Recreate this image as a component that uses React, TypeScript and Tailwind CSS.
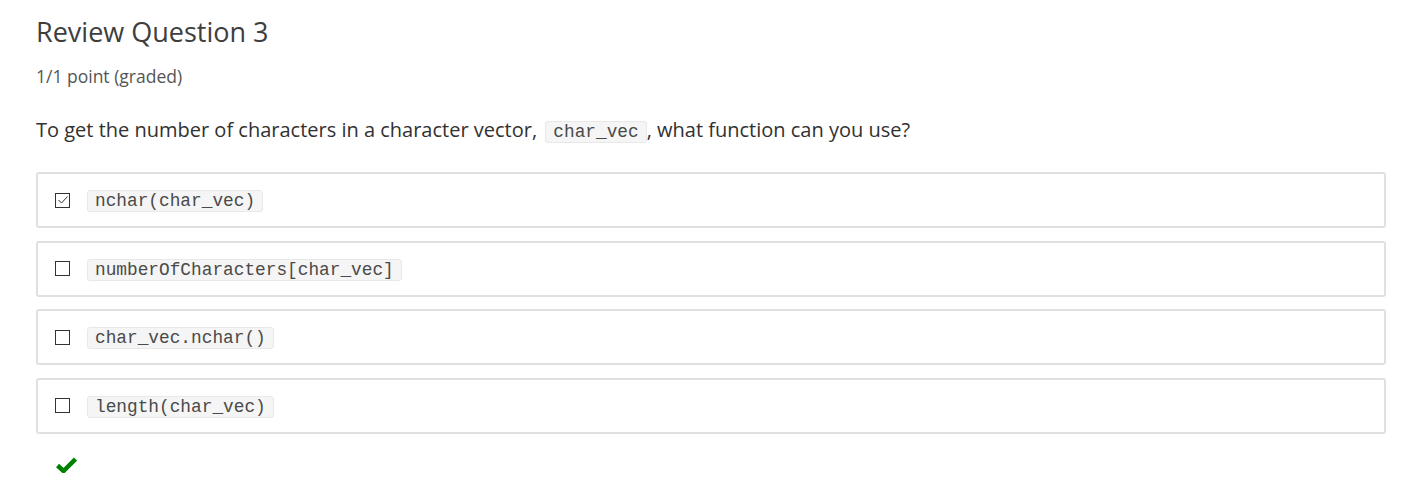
const options = [
  { code: 'nchar(char_vec)', checked: true },
  { code: 'numberOfCharacters[char_vec]', checked: false },
  { code: 'char_vec.nchar()', checked: false },
  { code: 'length(char_vec)', checked: false },
];

function Code({ children }: { children: string }) {
  return (
    <code className="inline-block rounded-[3px] border border-[#e8e8e8] bg-[#f5f5f5] px-[7px] leading-[20px] text-[17.8px] text-[#4a4a4a] [font-family:'Courier_New','Liberation_Mono',monospace]">
      {children}
    </code>
  );
}

export default function App() {
  return (
    <div className="min-h-[493px] bg-white pl-[36px] pr-[28px] pt-[14px] text-[#313131] [font-family:'Open_Sans',sans-serif]">
      <h2 className="text-[27px] leading-[36px] text-[#3e3e3e]">Review Question 3</h2>
      <p className="mt-[14px] text-[17.5px] leading-[24px] text-[#555]">1/1 point (graded)</p>

      <p className="mt-[28px] text-[20px] leading-[28px]">
        To get the number of characters in a character vector,{' '}
        <span className="ml-[3px]">
          <Code>char_vec</Code>
        </span>
        , what function can you use?
      </p>

      <div className="mt-[28px] flex flex-col gap-[12.5px]">
        {options.map((o) => (
          <label
            key={o.code}
            className="flex h-[56px] items-center rounded-[3px] border-2 border-[#e0e0e0] pl-[17px]"
          >
            <span className="flex h-[15px] w-[15px] items-center justify-center border border-[#333] bg-white">
              {o.checked && (
                <svg width="12" height="12" viewBox="0 0 12 12">
                  <path d="M1.5 6 L4.5 9 L10.5 2.5" fill="none" stroke="#333" strokeWidth="1" />
                </svg>
              )}
            </span>
            <span className="ml-[17px]">
              <Code>{o.code}</Code>
            </span>
          </label>
        ))}
      </div>

      <div className="mt-[23px] pl-[20px]">
        <svg width="21" height="16" viewBox="0 0 21 16">
          <path d="M1.5 8.5 L7.5 14 L19.5 2" fill="none" stroke="#008100" strokeWidth="4.5" />
        </svg>
      </div>
    </div>
  );
}
